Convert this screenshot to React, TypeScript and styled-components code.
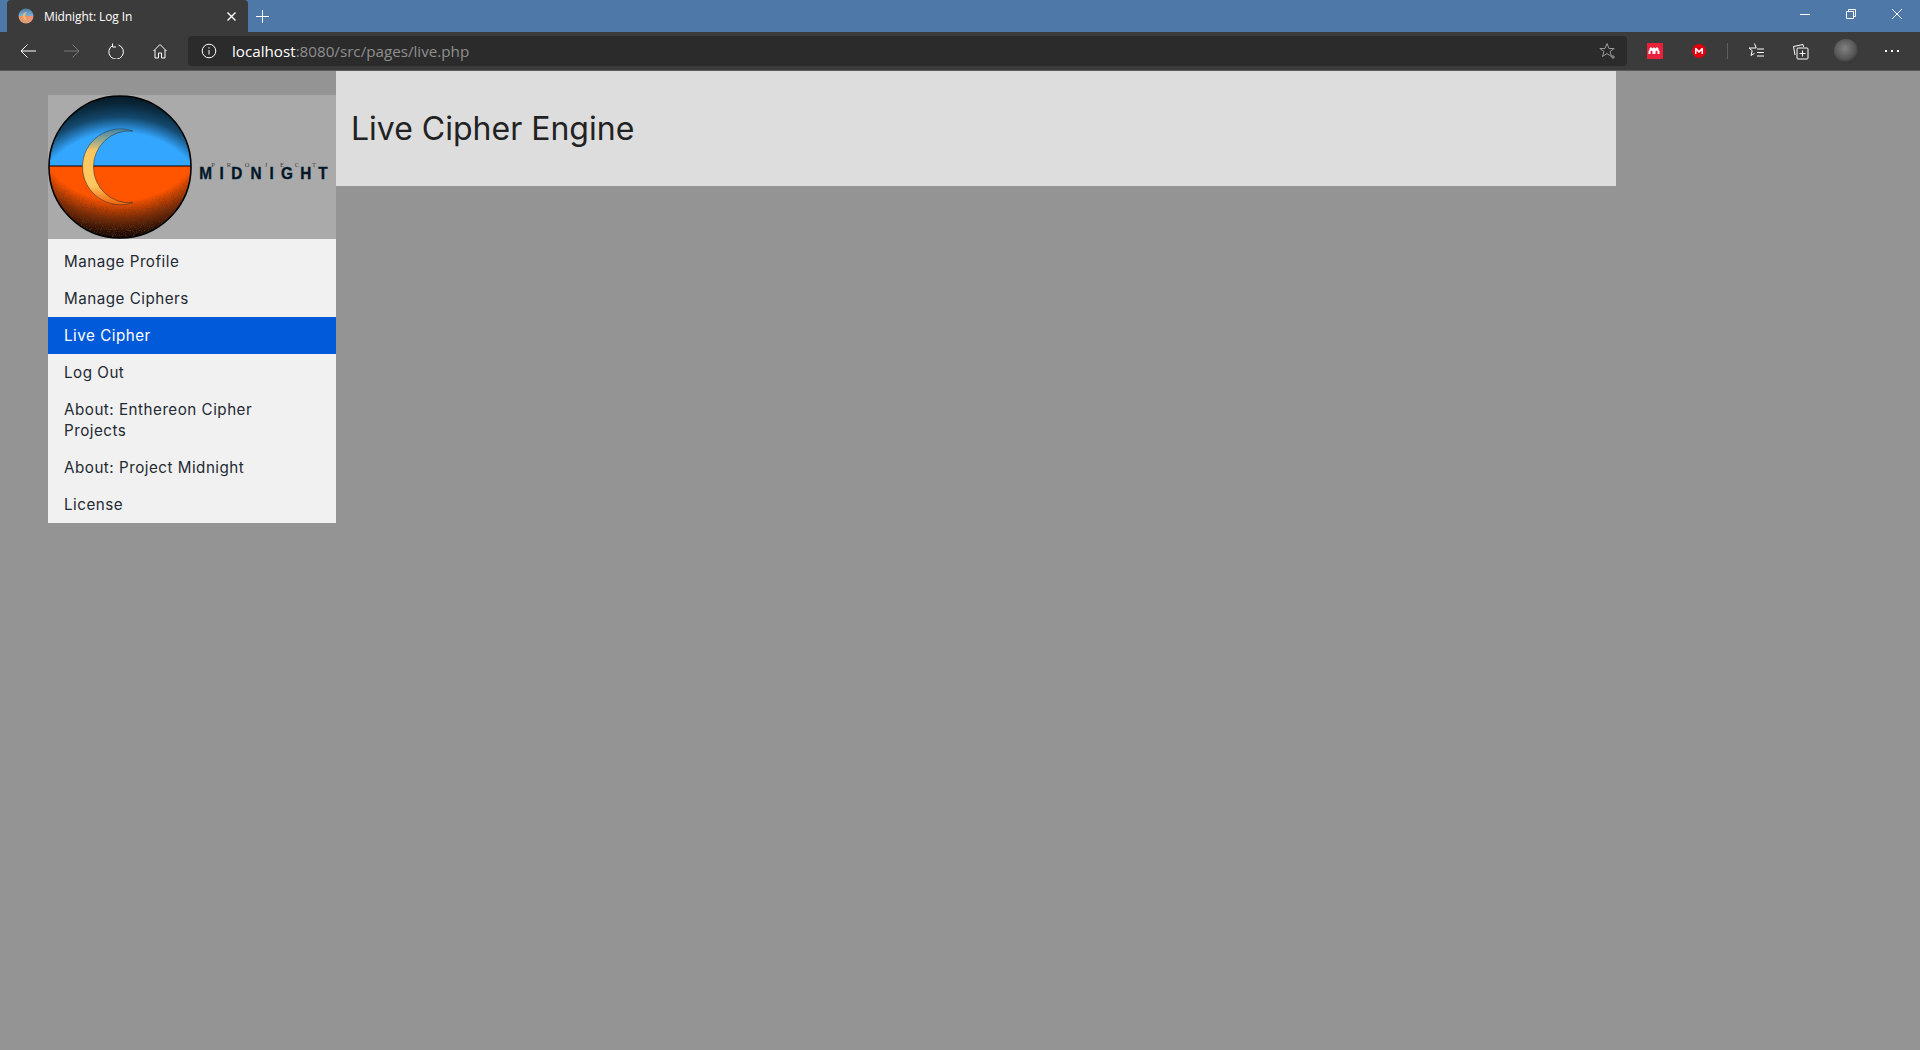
import React from "react";
import styled, { createGlobalStyle } from "styled-components";

const Global = createGlobalStyle`
  html, body { margin: 0; padding: 0; height: 100%; background: #949494; overflow: hidden; }
  #root { height: 100%; }
`;

const Screen = styled.div`
  width: 1920px;
  height: 1050px;
  display: flex;
  flex-direction: column;
  background: #949494;
  font-family: "Inter", "Liberation Sans", sans-serif;
`;

const TabStrip = styled.div`
  height: 32px;
  flex: none;
  background: #4e78a8;
  display: flex;
  align-items: flex-end;
  padding-left: 7px;
`;

const Tab = styled.div`
  width: 241px;
  height: 32px;
  box-sizing: border-box;
  background: #3b3b3b;
  border-radius: 4px 4px 0 0;
  display: flex;
  align-items: center;
  padding: 0 12px 0 11px;
  color: #fff;
  font-family: "Open Sans", "Liberation Sans", sans-serif;
  font-size: 12px;
  gap: 10px;
`;

const TabTitle = styled.span`
  flex: 1;
  white-space: nowrap;
  letter-spacing: -0.1px;
`;

const NewTab = styled.div`
  width: 28px;
  height: 32px;
  display: flex;
  align-items: center;
  justify-content: center;
`;

const WindowButtons = styled.div`
  margin-left: auto;
  display: flex;
  height: 32px;
  align-items: flex-start;
`;

const WindowButton = styled.div`
  width: 46px;
  height: 28px;
  display: flex;
  align-items: center;
  justify-content: center;
`;

const Toolbar = styled.div`
  height: 38px;
  flex: none;
  box-sizing: border-box;
  background: #3b3b3b;
  display: flex;
  align-items: center;
  padding-left: 6px;
`;

const ToolButton = styled.div<{ $w?: number }>`
  width: ${(p) => p.$w ?? 44}px;
  height: 32px;
  flex: none;
  display: flex;
  align-items: center;
  justify-content: center;
`;

const AddressBar = styled.div`
  width: 1439px;
  height: 30px;
  margin-left: 6px;
  box-sizing: border-box;
  flex: none;
  background: #2b2b2b;
  border-radius: 4px;
  display: flex;
  align-items: center;
  padding: 0 10px 0 13px;
  font-family: "Open Sans", "Liberation Sans", sans-serif;
  font-size: 15.2px;
  color: #8f8f8f;
`;

const UrlHost = styled.span`
  color: #fff;
`;

const UrlText = styled.div`
  margin-left: 15px;
  flex: 1;
  white-space: nowrap;
`;

const ToolDivider = styled.div`
  width: 1px;
  height: 16px;
  background: #5e5e5e;
  margin: 0 7px 0 6px;
  flex: none;
`;

const Extensions = styled.div`
  display: flex;
  align-items: center;
  margin-left: 6px;
`;

const PageEdge = styled.div`
  height: 1px;
  flex: none;
  background: #5a5a5a;
`;

const Page = styled.div`
  flex: 1;
  display: flex;
  align-items: flex-start;
  padding-left: 48px;
`;

const Sidebar = styled.nav`
  width: 288px;
  flex: none;
  margin-top: 24px;
`;

const LogoBox = styled.div`
  height: 144px;
  background: #aaaaaa;
  display: flex;
`;

const Menu = styled.div`
  background: #f1f1f1;
  padding-top: 4px;
`;

const MenuItem = styled.a<{ $active?: boolean }>`
  display: block;
  padding: 8px 48px 8px 16px;
  font-size: 15.2px;
  line-height: 21px;
  letter-spacing: 0.5px;
  color: ${(p) => (p.$active ? "#ffffff" : "#1f2a33")};
  background: ${(p) => (p.$active ? "#005ad9" : "transparent")};
`;

const Header = styled.header`
  width: 1280px;
  height: 115px;
  flex: none;
  background: #dddddd;
  display: flex;
  align-items: center;
  padding-left: 15px;
  box-sizing: border-box;
`;

const Title = styled.h1`
  margin: 0;
  font-size: 32px;
  font-weight: 400;
  letter-spacing: 0;
  color: #222222;
`;

const Glyph = ({ children, w = 16, h = 16, sw = 1, color = "#fff" }: { children: React.ReactNode; w?: number; h?: number; sw?: number; color?: string }) => (
  <svg width={w} height={h} viewBox={`0 0 ${w} ${h}`} fill="none" stroke={color} strokeWidth={sw}>
    {children}
  </svg>
);

const Favicon = () => (
  <svg width="16" height="16" viewBox="0 0 16 16">
    <defs>
      <linearGradient id="fav" x1="0" y1="0" x2="0" y2="1">
        <stop offset="0" stopColor="#4b7fa8" />
        <stop offset="0.5" stopColor="#7fb0d8" />
        <stop offset="0.5" stopColor="#f0906a" />
        <stop offset="1" stopColor="#d8a080" />
      </linearGradient>
    </defs>
    <circle cx="8" cy="8" r="7.5" fill="url(#fav)" />
    <path d="M9 4a4 4 0 1 0 0 8a5 5 0 0 1 0-8z" fill="#f3c060" />
  </svg>
);

const titleLetters: [string, number][] = [
  ["M", 157.7],
  ["I", 173.7],
  ["D", 188.7],
  ["N", 208],
  ["I", 223.7],
  ["G", 239],
  ["H", 257.7],
  ["T", 275],
];

const topLetters: [string, number][] = [
  ["P", 165],
  ["R", 181],
  ["O", 199],
  ["J", 218],
  ["E", 234],
  ["C", 249],
  ["T", 266],
];

const Logo = () => (
  <svg width="288" height="144" viewBox="0 0 288 144">
    <defs>
      <clipPath id="disc">
        <circle cx="72" cy="72" r="71" />
      </clipPath>
      <radialGradient id="skyShade" gradientUnits="userSpaceOnUse" cx="0" cy="0" r="1" gradientTransform="translate(72 110) scale(130 110)">
        <stop offset="0.66" stopColor="#07202f" stopOpacity="0" />
        <stop offset="0.8" stopColor="#07202f" stopOpacity="0.7" />
        <stop offset="0.92" stopColor="#07202f" stopOpacity="0.95" />
        <stop offset="1" stopColor="#081826" stopOpacity="1" />
      </radialGradient>
      <radialGradient id="groundShade" gradientUnits="userSpaceOnUse" cx="0" cy="0" r="1" gradientTransform="translate(72 33) scale(130 110)">
        <stop offset="0.66" stopColor="#2a1006" stopOpacity="0" />
        <stop offset="0.82" stopColor="#2a1006" stopOpacity="0.6" />
        <stop offset="0.95" stopColor="#1c0a04" stopOpacity="0.95" />
        <stop offset="1" stopColor="#160a05" stopOpacity="1" />
      </radialGradient>
      <linearGradient id="moon" gradientUnits="userSpaceOnUse" x1="0" y1="36" x2="0" y2="108">
        <stop offset="0" stopColor="#4f8ca6" />
        <stop offset="0.16" stopColor="#a8ae88" />
        <stop offset="0.28" stopColor="#ffc75f" />
        <stop offset="0.76" stopColor="#ffc75f" />
        <stop offset="0.88" stopColor="#f8983a" />
        <stop offset="1" stopColor="#f06a10" />
      </linearGradient>
      <filter id="grain" x="0" y="0" width="100%" height="100%">
        <feTurbulence type="fractalNoise" baseFrequency="1.1" numOctaves="2" seed="4" />
        <feColorMatrix values="0 0 0 0 0.1  0 0 0 0 0.04  0 0 0 0 0.02  0 0 0 3 -1.5" />
      </filter>
      <radialGradient id="grainFade" gradientUnits="userSpaceOnUse" cx="0" cy="0" r="1" gradientTransform="translate(72 33) scale(130 110)">
        <stop offset="0.66" stopColor="#000" />
        <stop offset="0.82" stopColor="#fff" />
        <stop offset="1" stopColor="#fff" />
      </radialGradient>
      <mask id="grainMask" maskUnits="userSpaceOnUse" x="0" y="71" width="144" height="73">
        <rect x="0" y="71" width="144" height="73" fill="url(#grainFade)" />
      </mask>
    </defs>
    <g clipPath="url(#disc)">
      <rect x="0" y="0" width="144" height="71" fill="#33a6ff" />
      <rect x="0" y="0" width="144" height="71" fill="url(#skyShade)" />
      <rect x="0" y="71" width="144" height="73" fill="#ff5500" />
      <rect x="0" y="71" width="144" height="73" fill="url(#groundShade)" />
      <g mask="url(#grainMask)">
        <rect x="0" y="71" width="144" height="73" filter="url(#grain)" />
      </g>
    </g>
    <circle cx="72" cy="72" r="71" fill="none" stroke="#000" strokeWidth="1.6" />
    <line x1="1" y1="71" x2="143" y2="71" stroke="#000" strokeWidth="1" />
    <path
      d="M84.700 36A37.900 37.900 0 1 0 84.700 107.700A36 36 0 1 1 84.700 36Z"
      fill="url(#moon)"
      stroke="#1e2a2e"
      strokeWidth="0.5"
    />
    <g fontFamily="'Liberation Serif', serif" fontSize="6.500" fill="#444" textAnchor="middle">
      {topLetters.map(([c, x]) => (
        <text key={x} x={x} y="72">
          {c}
        </text>
      ))}
    </g>
    <g fontFamily="'Liberation Sans', sans-serif" fontSize="17" fontWeight="700" fill="#04131f" stroke="#0a2a44" strokeWidth="0.45" textAnchor="middle">
      {titleLetters.map(([c, x]) => (
        <text key={x} transform={`translate(${x} 84) scale(0.9 1)`}>
          {c}
        </text>
      ))}
    </g>
  </svg>
);

const items = [
  "Manage Profile",
  "Manage Ciphers",
  "Live Cipher",
  "Log Out",
  "About: Enthereon Cipher Projects",
  "About: Project Midnight",
  "License",
];

export default function App() {
  return (
    <Screen>
      <Global />
      <TabStrip>
        <Tab>
          <Favicon />
          <TabTitle>Midnight: Log In</TabTitle>
          <Glyph w={9} h={9} sw={1.4}>
            <path d="M.5.5l8 8M8.500.5l-8 8" />
          </Glyph>
        </Tab>
        <NewTab>
          <Glyph w={13} h={13}>
            <path d="M6.500 0v13M0 6.500h13" />
          </Glyph>
        </NewTab>
        <WindowButtons>
          <WindowButton>
            <Glyph w={10} h={10}>
              <path d="M0 5.500h10" />
            </Glyph>
          </WindowButton>
          <WindowButton>
            <Glyph w={10} h={10}>
              <path d="M.5 2.500h7v7h-7zM2.500 2.500v-2h7v7h-2" />
            </Glyph>
          </WindowButton>
          <WindowButton>
            <Glyph w={10} h={10}>
              <path d="M0 0l10 10M10 0L0 10" />
            </Glyph>
          </WindowButton>
        </WindowButtons>
      </TabStrip>
      <Toolbar>
        <ToolButton>
          <Glyph>
            <path d="M16 8H1M7.500 1.500L1 8l6.500 6.500" />
          </Glyph>
        </ToolButton>
        <ToolButton>
          <Glyph color="#777">
            <path d="M0 8h15M8.500 1.500L15 8l-6.500 6.500" />
          </Glyph>
        </ToolButton>
        <ToolButton>
          <Glyph>
            <path d="M5 1.800A7.300 7.300 0 1 0 10.500 1.500M4.500 0v3.500H8" transform="translate(0 .5)" />
          </Glyph>
        </ToolButton>
        <ToolButton>
          <Glyph>
            <path d="M1.500 8L8 1.500 14.500 8M3 7v8h3.500v-5h3v5H13V7" />
          </Glyph>
        </ToolButton>
        <AddressBar>
          <Glyph>
            <circle cx="8" cy="8" r="6.800" />
            <path d="M8 7v4.500M8 4.200v1.400" />
          </Glyph>
          <UrlText>
            <UrlHost>localhost</UrlHost>:8080/src/pages/live.php
          </UrlText>
          <Glyph w={18} h={18} color="#9a9a9a">
            <path d="M8 1.500l2 5h5.200l-4.200 3 1.600 5L8 11.600 3.400 14.500l1.600-5-4.200-3H6z" />
            <path d="M14 13v4M12 15h4" />
          </Glyph>
        </AddressBar>
        <Extensions>
          <ToolButton>
            <svg width="16" height="16" viewBox="0 0 16 16">
              <rect width="16" height="16" fill="#e8203a" />
              <path d="M1.500 11V8l1-1v-1.500l1.500-1.500 1.500 1.500 1-1 1 0 1 1 1.500-1.500 1.500 1.500V7l1 1v3h-2V8.500l-1-1-1 1V11h-1.500V8.500L8 7.500 7 8.500V11H5.500V8.500l-1-1-1 1V11z" fill="#fff" />
            </svg>
          </ToolButton>
          <ToolButton>
            <svg width="16" height="16" viewBox="0 0 16 16">
              <circle cx="8" cy="8" r="7" fill="#e2000f" />
              <path d="M4 11V5h1.400L8 7.800 10.600 5H12v6h-1.500V7.500L8 10 5.500 7.500V11z" fill="#fff" />
            </svg>
          </ToolButton>
          <ToolDivider />
          <ToolButton>
            <Glyph w={18} h={18}>
              <path d="M6.500 1.500l1.700 4.500H5M5 6H1l3.200 2.700L3 13.500l3.500-2.200" />
              <path d="M9 7h7M9 10.500h7M9 14h7" />
            </Glyph>
          </ToolButton>
          <ToolButton>
            <Glyph w={18} h={18}>
              <path d="M3 13L1.500 4.500 11 2.500l.6 2.500" />
              <rect x="5" y="6" width="11" height="11" rx="1" />
              <path d="M10.500 8.500v6M7.500 11.500h6" />
            </Glyph>
          </ToolButton>
          <ToolButton $w={46}>
            <svg width="24" height="24" viewBox="0 0 24 24">
              <defs>
                <radialGradient id="avatar" cx="0.45" cy="0.4" r="0.65">
                  <stop offset="0" stopColor="#a0a0a0" />
                  <stop offset="0.7" stopColor="#626262" />
                  <stop offset="1" stopColor="#2a2a2a" />
                </radialGradient>
                <pattern id="mesh" width="2" height="2" patternUnits="userSpaceOnUse">
                  <rect x="0.500" y="0.500" width="1" height="1" fill="#262626" />
                </pattern>
              </defs>
              <circle cx="12" cy="12" r="12" fill="url(#avatar)" />
              <circle cx="12" cy="12" r="12" fill="url(#mesh)" />
            </svg>
          </ToolButton>
          <ToolButton $w={46}>
            <svg width="14" height="4" viewBox="0 0 14 4" fill="#fff">
              <rect x="0" y="1" width="2" height="2" />
              <rect x="6" y="1" width="2" height="2" />
              <rect x="12" y="1" width="2" height="2" />
            </svg>
          </ToolButton>
        </Extensions>
      </Toolbar>
      <PageEdge />
      <Page>
        <Sidebar>
          <LogoBox>
            <Logo />
          </LogoBox>
          <Menu>
            {items.map((t) => (
              <MenuItem key={t} $active={t === "Live Cipher"}>
                {t}
              </MenuItem>
            ))}
          </Menu>
        </Sidebar>
        <Header>
          <Title>Live Cipher Engine</Title>
        </Header>
      </Page>
    </Screen>
  );
}
